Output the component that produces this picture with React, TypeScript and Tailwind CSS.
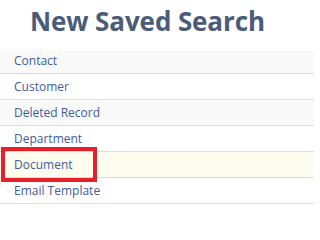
const rows = [
  { label: 'Contact', tone: 'stripe', first: true },
  { label: 'Customer', tone: 'plain' },
  { label: 'Deleted Record', tone: 'stripe' },
  { label: 'Department', tone: 'plain' },
  { label: 'Document', tone: 'hover', marked: true },
  { label: 'Email Template', tone: 'plain' },
];

const toneClass: Record<string, string> = {
  stripe: 'bg-[#f9f9f9]',
  plain: 'bg-white',
  hover: 'bg-[#fdfdef]',
};

export default function App() {
  return (
    <div className="w-[314px] h-[207px] overflow-hidden bg-white font-['Open_Sans',sans-serif]">
      <div className="h-[51px] pl-[30px] pt-[4px]">
        <h1 className="text-[26px] leading-[34px] font-bold text-[#4b5b78] tracking-[-0.1px]">New Saved Search</h1>
      </div>
      <ul>
        {rows.map((row) => (
          <li
            key={row.label}
            className={`relative flex items-center border-b border-[#dddddd] pl-[14px] text-[12px] text-[#3f5b98] ${
              row.first ? 'h-[23px] pb-[3px]' : 'h-[26px]'
            } ${toneClass[row.tone]}`}
          >
            {row.label}
            {row.marked && (
              <span className="absolute z-10 left-[1px] top-[-5px] w-[96px] h-[35px] border-4 border-[#e5202a]" />
            )}
          </li>
        ))}
      </ul>
    </div>
  );
}
